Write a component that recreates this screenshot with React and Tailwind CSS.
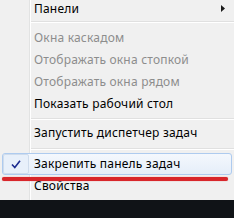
const Sep = ({ h }) => (
  <div className={`${h} shrink-0 flex flex-col justify-center pl-[31px]`}>
    <div className="h-px bg-[#e0e0e0]" />
    <div className="h-px bg-white" />
  </div>
)

const Item = ({ label, disabled, arrow, h = "h-[22px]" }) => (
  <div className={`${h} shrink-0 flex items-center pl-[34px] pr-[9px]`}>
    <span className={`flex-1 ${disabled ? "text-[#8d8d8d]" : "text-black"}`}>{label}</span>
    {arrow && (
      <svg width="4" height="7" viewBox="0 0 4 7">
        <path d="M0 0 L4 3.5 L0 7 Z" fill="#1a1a1a" />
      </svg>
    )}
  </div>
)

export default function App() {
  return (
    <div className="w-[234px] h-[218px] overflow-hidden bg-[#101317] text-[12px] leading-[16px] tracking-[0.2px] font-['Noto_Sans',sans-serif]">
      <div className="relative bg-[#f0f0f0] h-[200px] flex flex-col">
        <div className="absolute left-[29px] top-0 bottom-0 w-px bg-[#e2e3e3]" />
        <div className="absolute left-[30px] top-0 bottom-0 w-px bg-white" />

        <Item label="Панели" arrow h="h-[17px]" />
        <Sep h="h-[10px]" />
        <Item label="Окна каскадом" disabled />
        <Item label="Отображать окна стопкой" disabled />
        <Item label="Отображать окна рядом" disabled />
        <Item label="Показать рабочий стол" />
        <Sep h="h-[7px]" />
        <Item label="Запустить диспетчер задач" />
        <Sep h="h-[9px]" />
        <div className="relative mx-[2px] h-[22px] shrink-0 flex items-center rounded-[3px] border border-[#aecbef] bg-gradient-to-b from-[#f4f8fd] to-[#e5eef9]">
          <div className="w-[26px] h-[20px] flex items-center justify-center rounded-[2px] border border-[#cfdcec] bg-[#e8f0fa]">
            <svg width="10" height="9" viewBox="0 0 10 9">
              <path d="M1 4.5 L3.8 7.6 L9 0.8" fill="none" stroke="#1c2b8f" strokeWidth="1.6" />
            </svg>
          </div>
          <span className="pl-[5px] text-black">Закрепить панель задач</span>
        </div>
        <Item label="Свойства" />

        <div className="absolute left-[2px] w-[226px] top-[177px] h-[4px] rounded-full bg-[#d8262b] shadow-[0_0_1px_#e05a5c]" />
      </div>
    </div>
  )
}
